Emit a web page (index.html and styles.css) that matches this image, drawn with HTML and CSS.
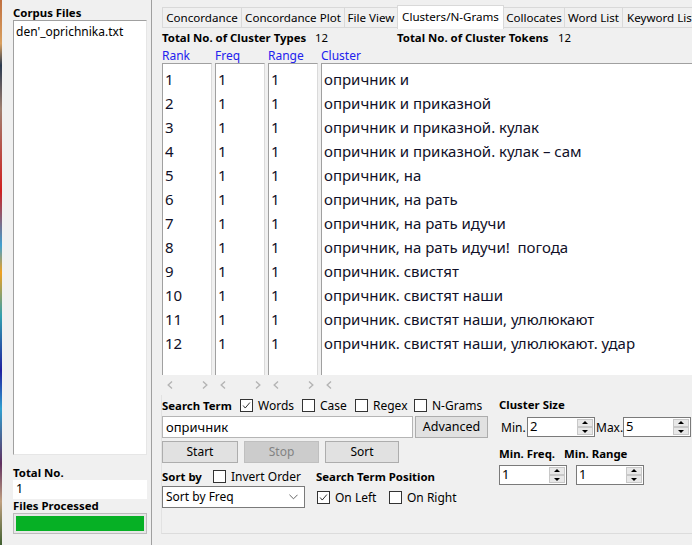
FILE: index.html
```html
<!DOCTYPE html>
<html lang="ru">
<head>
<meta charset="utf-8">
<title>AntConc</title>
<link rel="stylesheet" href="styles.css">
</head>
<body>
<div class="app">
  <div class="desk"></div>
  <aside class="left">
    <div class="lbl">Corpus Files</div>
    <div class="corpus"><div class="item">den'_oprichnika.txt</div></div>
    <div class="lbl total-lbl">Total No.</div>
    <div class="total">1</div>
    <div class="lbl">Files Processed</div>
    <div class="progress"><div class="fill"></div></div>
  </aside>
  <main class="right">
    <nav class="tabs">
      <div class="tab t1">Concordance</div>
      <div class="tab t2">Concordance Plot</div>
      <div class="tab t3">File View</div>
      <div class="tab t4 sel">Clusters/N-Grams</div>
      <div class="tab t5">Collocates</div>
      <div class="tab t6">Word List</div>
      <div class="tab t7">Keyword List</div>
    </nav>
    <div class="stats">
      <span class="b s1">Total No. of Cluster Types</span><span class="n1">12</span>
      <span class="b s2">Total No. of Cluster Tokens</span><span class="n2">12</span>
    </div>
    <div class="cols heads">
      <div>Rank</div><div>Freq</div><div>Range</div><div>Cluster</div>
    </div>
    <div class="cols lists">
      <div class="box">
        <div>1</div><div>2</div><div>3</div><div>4</div><div>5</div><div>6</div><div>7</div><div>8</div><div>9</div><div>10</div><div>11</div><div>12</div>
      </div>
      <div class="box">
        <div>1</div><div>1</div><div>1</div><div>1</div><div>1</div><div>1</div><div>1</div><div>1</div><div>1</div><div>1</div><div>1</div><div>1</div>
      </div>
      <div class="box">
        <div>1</div><div>1</div><div>1</div><div>1</div><div>1</div><div>1</div><div>1</div><div>1</div><div>1</div><div>1</div><div>1</div><div>1</div>
      </div>
      <div class="box">
        <div>опричник и</div>
        <div>опричник и приказной</div>
        <div>опричник и приказной. кулак</div>
        <div>опричник и приказной. кулак – сам</div>
        <div>опричник, на</div>
        <div>опричник, на рать</div>
        <div>опричник, на рать идучи</div>
        <div>опричник, на рать идучи!&nbsp; погода</div>
        <div>опричник. свистят</div>
        <div>опричник. свистят наши</div>
        <div>опричник. свистят наши, улюлюкают</div>
        <div>опричник. свистят наши, улюлюкают. удар</div>
      </div>
    </div>
    <div class="cols scrolls">
      <div class="sc"><svg class="ch" viewBox="0 0 6 8"><polyline points="5,0.5 1.2,4 5,7.5"/></svg><svg class="ch" viewBox="0 0 6 8"><polyline points="1,0.5 4.8,4 1,7.5"/></svg></div>
      <div class="sc"><svg class="ch" viewBox="0 0 6 8"><polyline points="5,0.5 1.2,4 5,7.5"/></svg><svg class="ch" viewBox="0 0 6 8"><polyline points="1,0.5 4.8,4 1,7.5"/></svg></div>
      <div class="sc"><svg class="ch" viewBox="0 0 6 8"><polyline points="5,0.5 1.2,4 5,7.5"/></svg><svg class="ch" viewBox="0 0 6 8"><polyline points="1,0.5 4.8,4 1,7.5"/></svg></div>
      <div class="sc"><svg class="ch" viewBox="0 0 6 8"><polyline points="5,0.5 1.2,4 5,7.5"/></svg></div>
    </div>
    <section class="controls">
      <div class="lcol">
        <div class="row r1">
          <span class="b st">Search Term</span>
          <span class="cb on"><svg viewBox="0 0 13 13"><polyline points="2.5,6.5 5,9.5 10.5,3"/></svg></span><span class="cl wl1">Words</span>
          <span class="cb"></span><span class="cl wl2">Case</span>
          <span class="cb"></span><span class="cl wl3">Regex</span>
          <span class="cb"></span><span class="cl">N-Grams</span>
        </div>
        <div class="row r2">
          <div class="input">опричник</div>
          <div class="btn adv">Advanced</div>
        </div>
        <div class="row r3">
          <div class="btn start">Start</div>
          <div class="btn stop">Stop</div>
          <div class="btn sort">Sort</div>
        </div>
        <div class="row r4">
          <span class="b sortby">Sort by</span>
          <span class="cb"></span><span class="cl inv">Invert Order</span>
          <span class="b">Search Term Position</span>
        </div>
        <div class="row r5">
          <div class="select">Sort by Freq<svg class="dd" viewBox="0 0 10 6"><polyline points="0.5,0.5 5,5 9.5,0.5"/></svg></div>
          <span class="cb on ol"><svg viewBox="0 0 13 13"><polyline points="2.5,6.5 5,9.5 10.5,3"/></svg></span><span class="cl oll">On Left</span>
          <span class="cb"></span><span class="cl">On Right</span>
        </div>
      </div>
      <div class="rcol">
        <div class="b">Cluster Size</div>
        <div class="row sizes">
          <span class="sl sl1">Min.</span>
          <div class="spin"><span class="v">2</span><span class="arr"><i class="up"></i><i class="dn"></i></span></div>
          <span class="sl sl2">Max.</span>
          <div class="spin"><span class="v">5</span><span class="arr"><i class="up"></i><i class="dn"></i></span></div>
        </div>
        <div class="row mins">
          <span class="b mf">Min. Freq.</span><span class="b">Min. Range</span>
        </div>
        <div class="row minsp">
          <div class="spin"><span class="v">1</span><span class="arr"><i class="up"></i><i class="dn"></i></span></div>
          <div class="spin"><span class="v">1</span><span class="arr"><i class="up"></i><i class="dn"></i></span></div>
        </div>
      </div>
    </section>
  </main>
</div>
</body>
</html>
```

FILE: styles.css
```css
* { box-sizing: border-box; }
html, body {
  margin: 0;
  padding: 0;
  width: 692px;
  height: 545px;
  overflow: hidden;
  background: #f0f0f0;
  font-family: "Noto Sans", "Open Sans", sans-serif;
  font-size: 11.4px;
  color: #000;
}
.app {
  display: flex;
  width: 692px;
  height: 545px;
}
.desk {
  width: 2px;
  flex: none;
  background: linear-gradient(#c07040 0, #d9a060 8%, #2a3a50 12%, #a08070 20%, #d02020 35%, #40a0d0 45%, #f0a020 50%, #30a0b0 58%, #2020a0 68%, #30a0d0 75%, #603060 85%, #c0a080 92%, #406030 100%);
}
.left {
  width: 150px;
  flex: none;
  border-right: 1px solid #a0a0a0;
  padding: 6px 4px 11px 11px;
  display: flex;
  flex-direction: column;
}
.lbl {
  font-weight: bold;
  height: 14px;
  line-height: 14px;
}
.corpus {
  flex: 1;
  background: #fff;
  border-top: 1px solid #a0a0a0;
  border-left: 1px solid #a0a0a0;
  border-right: 1px solid #e6e6e6;
  border-bottom: 1px solid #e6e6e6;
  padding: 2px 2px;
  font-size: 12px;
  line-height: 18px;
}
.total-lbl { margin-top: 11px; }
.total {
  background: #fff;
  height: 19px;
  line-height: 17px;
  padding-left: 3px;
  font-size: 12.5px;
  overflow: hidden;
}
.progress {
  height: 21px;
  border: 1px solid #bcbcbc;
  background: #e6e6e6;
  padding: 2px;
}
.fill {
  height: 100%;
  background: #06b025;
}
.right {
  flex: 1;
  padding-left: 10px;
  display: flex;
  flex-direction: column;
  min-width: 0;
}
.tabs {
  display: flex;
  margin-top: 7px;
  height: 21px;
  white-space: nowrap;
}
.tab {
  height: 21px;
  line-height: 19px;
  border: 1px solid #d9d9d9;
  background: #f0f0f0;
  text-align: center;
  margin-left: -1px;
  flex: none;
  font-size: 11.6px;
}
.t1 { width: 80px; margin-left: 0; }
.t2 { width: 104px; }
.t3 { width: 54px; }
.t4 { width: 107px; }
.t5 { width: 62px; }
.t6 { width: 59px; }
.t7 { width: 80px; text-align: left; padding-left: 4px; }
.tab.sel {
  background: #fff;
  height: 24px;
  margin-top: -2px;
  line-height: 22px;
  border-bottom: none;
  position: relative;
}
.stats {
  margin-top: 3px;
  height: 14px;
  line-height: 14px;
  display: flex;
  white-space: nowrap;
}
.b { font-weight: bold; }
.stats .s1 { width: 153px; }
.stats .n1 { width: 82px; }
.stats .s2 { width: 161px; }
.cols {
  display: grid;
  grid-template-columns: 50px 50px 50px 1fr;
  column-gap: 3px;
  margin-right: -4px;
}
.heads {
  margin-top: 4px;
  height: 14px;
  line-height: 14px;
  color: #2222ee;
  font-size: 12px;
}
.lists {
  height: 312px;
}
.box {
  background: #fff;
  border-top: 1px solid #a0a0a0;
  border-left: 1px solid #a0a0a0;
  border-right: 1px solid #dadada;
  padding: 3px 0 0 2px;
  font-size: 15px;
  white-space: nowrap;
  overflow: hidden;
  color: #101028;
}
.box div {
  height: 24px;
  line-height: 24px;
}
.scrolls {
  height: 20px;
  align-items: center;
}
.sc {
  display: flex;
  justify-content: space-between;
  padding: 0 4px 0 5px;
  height: 8px;
}
.ch {
  width: 6px;
  height: 8px;
  display: block;
}
.ch polyline {
  fill: none;
  stroke: #b4b4b4;
  stroke-width: 1.4;
}
.controls {
  display: flex;
  padding-top: 3px;
  height: 139px;
  border-bottom: 1px solid #dcdcdc;
  border-left: 1px solid #e2e2e2;
  margin-left: -1px;
  margin-right: -4px;
  flex: none;
}
.lcol {
  width: 326px;
  flex: none;
  display: flex;
  flex-direction: column;
}
.row {
  display: flex;
  align-items: center;
  white-space: nowrap;
}
.r1 { height: 14px; }
.st { width: 78px; }
.cb {
  width: 13px;
  height: 13px;
  border: 1px solid #333;
  background: #fff;
  flex: none;
  display: inline-block;
}
.cb svg { width: 11px; height: 11px; display: block; }
.cb svg polyline { fill: none; stroke: #222; stroke-width: 1.1; }
.cl { margin-left: 5px; font-size: 12px; }
.wl1 { width: 44px; }
.wl2 { width: 35px; }
.wl3 { width: 41px; }
.r2 { margin-top: 4px; height: 22px; }
.input {
  width: 251px;
  height: 22px;
  border: 1px solid #b5b5b5;
  background: #fff;
  font-size: 13px;
  line-height: 20px;
  padding-left: 3px;
}
.btn {
  height: 22px;
  line-height: 20px;
  border: 1px solid #adadad;
  background: #e1e1e1;
  text-align: center;
  font-size: 12px;
}
.adv { width: 73px; margin-left: 2px; font-size: 12.5px; }
.r3 { margin-top: 3px; height: 22px; }
.start { width: 76px; }
.stop { width: 75px; margin-left: 6px; background: #cccccc; border-color: #bfbfbf; color: #838383; }
.sort { width: 74px; margin-left: 6px; }
.r4 { margin-top: 6px; height: 14px; }
.sortby { width: 51px; }
.r4 .inv { width: 85px; }
.r5 { margin-top: 3px; height: 22px; }
.select {
  width: 143px;
  height: 22px;
  border: 1px solid #7a7a7a;
  background: #fff;
  line-height: 20px;
  padding-left: 3px;
  display: flex;
  align-items: center;
  justify-content: space-between;
  padding-right: 6px;
  font-size: 12px;
}
.dd { width: 9px; height: 6px; }
.dd polyline { fill: none; stroke: #555; stroke-width: 1; }
.r5 .ol { margin-left: 12px; }
.oll { width: 54px; }
.rcol {
  margin-left: 11px;
  display: flex;
  flex-direction: column;
}
.rcol > .b { height: 14px; line-height: 14px; }
.sizes { margin-top: 5px; height: 20px; }
.sl { font-size: 12px; }
.sl1 { margin-left: 2px; width: 26px; }
.sl2 { margin-left: 1px; width: 27px; }
.spin {
  width: 68px;
  height: 20px;
  border: 1px solid #7a7a7a;
  background: #fff;
  display: flex;
  justify-content: space-between;
  flex: none;
}
.spin .v {
  font-size: 13px;
  line-height: 17px;
  padding-left: 2px;
}
.spin .arr {
  width: 17px;
  display: flex;
  flex-direction: column;
  padding: 1px 1px 1px 0;
}
.spin .arr i {
  flex: 1;
  background: #e8e8e8;
  border: 1px solid #c8c8c8;
  position: relative;
}
.spin .arr i::after {
  content: "";
  position: absolute;
  left: 50%;
  top: 50%;
  margin-left: -3px;
  border-left: 3px solid transparent;
  border-right: 3px solid transparent;
}
.spin .arr .up::after { border-bottom: 3px solid #000; margin-top: -2px; }
.spin .arr .dn::after { border-top: 3px solid #000; margin-top: -1px; }
.mins { margin-top: 9px; height: 14px; }
.mf { width: 65px; }
.minsp { margin-top: 5px; height: 20px; }
.minsp .spin + .spin { margin-left: 9px; }
```
